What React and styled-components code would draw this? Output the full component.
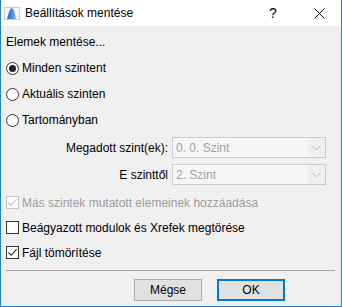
import React from "react";
import styled, { createGlobalStyle } from "styled-components";

const Global = createGlobalStyle`
  html, body { margin: 0; padding: 0; background: #f0f0f0; }
  body { font-family: "Liberation Sans", Arial, sans-serif; font-size: 12px; color: #000; }
  * { box-sizing: border-box; }
`;

const Window = styled.div`
  width: 342px;
  height: 307px;
  display: flex;
  flex-direction: column;
  background: #f0f0f0;
  border: 1px solid #1883d7;
  border-top: none;
  overflow: hidden;
`;

const TitleBar = styled.div`
  height: 26px;
  flex: none;
  display: flex;
  align-items: center;
  background: #fff;
  margin: 0 -1px;
`;

const AppIcon = styled.svg`
  margin-left: 4px;
  width: 16px;
  height: 16px;
  flex: none;
`;

const Title = styled.div`
  margin-left: 5px;
  font-size: 12px;
  flex: 1;
`;

const TitleButton = styled.div`
  width: 46px;
  height: 26px;
  display: flex;
  align-items: center;
  justify-content: center;
  font-size: 14px;
`;

const Body = styled.div`
  flex: 1;
  display: flex;
  flex-direction: column;
  padding: 0 6px 0 5px;
`;

const SectionLabel = styled.div`
  margin-top: 8px;
  height: 16px;
  line-height: 16px;
`;

const OptionList = styled.div`
  display: flex;
  flex-direction: column;
  margin-top: ${(p) => p.$top}px;
`;

const OptionRow = styled.label`
  height: ${(p) => p.$h}px;
  display: flex;
  align-items: center;
  gap: 3px;
  color: ${(p) => (p.$disabled ? "#9d9d9d" : "#000")};
`;

const RadioCircle = styled.span`
  width: 13px;
  height: 13px;
  border-radius: 50%;
  border: 1px solid #333;
  background: #fff;
  display: flex;
  align-items: center;
  justify-content: center;
  flex: none;
  &::after {
    content: "";
    width: 7px;
    height: 7px;
    border-radius: 50%;
    background: #222;
    display: ${(p) => (p.$checked ? "block" : "none")};
  }
`;

const CheckBox = styled.span`
  width: 13px;
  height: 13px;
  border: 1px solid ${(p) => (p.$disabled ? "#c4c4c4" : "#333")};
  background: #fff;
  display: flex;
  align-items: center;
  justify-content: center;
  flex: none;
`;

const Fields = styled.div`
  display: flex;
  flex-direction: column;
  gap: 6px;
  margin-top: 4px;
`;

const FieldRow = styled.div`
  display: flex;
  align-items: center;
  justify-content: flex-end;
  gap: 4px;
  padding-right: 9px;
`;

const Select = styled.div`
  width: 154px;
  height: 21px;
  border: 1px solid #cccccc;
  background: #f0f0f0;
  display: flex;
  align-items: stretch;
`;

const SelectText = styled.div`
  flex: 1;
  padding-left: 3px;
  display: flex;
  align-items: center;
  color: #a3a3a3;
  background: #f6f6f6;
`;

const SelectArrow = styled.div`
  width: 17px;
  display: flex;
  align-items: center;
  justify-content: center;
`;

const Separator = styled.div`
  height: 1px;
  background: #a0a0a0;
  margin-top: 5px;
`;

const ButtonRow = styled.div`
  display: flex;
  justify-content: flex-end;
  gap: 15px;
  margin-top: 8px;
  padding-right: 50px;
`;

const Button = styled.div`
  width: 68px;
  height: 22px;
  display: flex;
  align-items: center;
  justify-content: center;
  background: #e1e1e1;
  border: ${(p) => (p.$default ? "2px solid #0078d7" : "1px solid #adadad")};
`;

const Check = ({ color }) => (
  <svg width="11" height="11" viewBox="0 0 11 11">
    <path d="M1.5 5.5 L4.2 8.3 L9.6 2.2" fill="none" stroke={color} strokeWidth="1.1" />
  </svg>
);

const Chevron = () => (
  <svg width="9" height="6" viewBox="0 0 9 6">
    <path d="M0.5 0.8 L4.5 4.8 L8.5 0.8" fill="none" stroke="#b3b3b3" strokeWidth="1" />
  </svg>
);

export default function App() {
  return (
    <>
      <Global />
      <Window>
        <TitleBar>
          <AppIcon viewBox="0 0 16 16">
            <defs>
              <linearGradient id="sail" x1="0" x2="1" y1="0" y2="0">
                <stop offset="0" stopColor="#1d5fc9" />
                <stop offset="1" stopColor="#7fb6f0" />
              </linearGradient>
            </defs>
            <rect x="0.5" y="2.5" width="15" height="12" fill="#f4f6f9" stroke="#c9ced6" />
            <path d="M3 14 L5 7 Q6.5 3 8.2 3 Q10 3 12 14 Z" fill="url(#sail)" />
          </AppIcon>
          <Title>Beállítások mentése</Title>
          <TitleButton>?</TitleButton>
          <TitleButton>
            <svg width="11" height="11" viewBox="0 0 11 11">
              <path d="M0.5 0.5 L10.5 10.5 M10.5 0.5 L0.5 10.5" stroke="#111" strokeWidth="1" />
            </svg>
          </TitleButton>
        </TitleBar>
        <Body>
          <SectionLabel>Elemek mentése...</SectionLabel>
          <OptionList $top={5}>
            <OptionRow $h={26}>
              <RadioCircle $checked />
              Minden szintent
            </OptionRow>
            <OptionRow $h={26}>
              <RadioCircle />
              Aktuális szinten
            </OptionRow>
            <OptionRow $h={26}>
              <RadioCircle />
              Tartományban
            </OptionRow>
          </OptionList>
          <Fields>
            <FieldRow>
              <span>Megadott szint(ek):</span>
              <Select>
                <SelectText>0. 0. Szint</SelectText>
                <SelectArrow>
                  <Chevron />
                </SelectArrow>
              </Select>
            </FieldRow>
            <FieldRow>
              <span>E szinttől</span>
              <Select>
                <SelectText>2. Szint</SelectText>
                <SelectArrow>
                  <Chevron />
                </SelectArrow>
              </Select>
            </FieldRow>
          </Fields>
          <OptionList $top={5}>
            <OptionRow $h={25} $disabled>
              <CheckBox $disabled>
                <Check color="#c0c0c0" />
              </CheckBox>
              Más szintek mutatott elemeinek hozzáadása
            </OptionRow>
            <OptionRow $h={25}>
              <CheckBox />
              Beágyazott modulok és Xrefek megtörése
            </OptionRow>
            <OptionRow $h={25}>
              <CheckBox>
                <Check color="#222" />
              </CheckBox>
              Fájl tömörítése
            </OptionRow>
          </OptionList>
          <Separator />
          <ButtonRow>
            <Button>Mégse</Button>
            <Button $default>OK</Button>
          </ButtonRow>
        </Body>
      </Window>
    </>
  );
}
